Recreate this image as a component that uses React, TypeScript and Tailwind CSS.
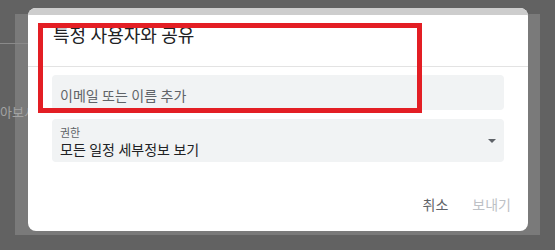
import { useState } from 'react';

const font = { fontFamily: 'Roboto, "Noto Sans CJK KR", sans-serif' };

// Drop-down caret of the permission field
const Caret = () => (
    <svg width="8" height="4" viewBox="0 0 8 4" className="shrink-0">
        <polygon points="0,0 8,0 4,4" fill="#5f6368" />
    </svg>
);

const ShareDialog = () => {
    const [email, setEmail] = useState('');

    return (
        <div className="absolute left-[28px] top-[8px] w-[500px] h-[223px] bg-white rounded-lg overflow-hidden flex flex-col">
            <div className="h-[7px] bg-[#cdcdcd]" />
            <div className="px-[25px] pt-[9px] pb-[18px] border-b border-[#e3e3e3]">
                <h2 className="text-[18px] leading-6 text-[#202124]">특정 사용자와 공유</h2>
            </div>
            <div className="px-6 pt-2 flex flex-col gap-[9px]">
                <input
                    value={email}
                    onChange={(e) => setEmail(e.target.value)}
                    placeholder="이메일 또는 이름 추가"
                    className="h-[35px] w-full rounded bg-[#f1f3f4] pl-2 pt-[7px] text-[14px] text-[#202124] outline-none placeholder:text-[#5f6368]"
                />
                <div className="h-[43px] rounded bg-[#f1f3f4] pl-2 pr-2 flex items-center justify-between">
                    <div className="flex flex-col pt-[5px]">
                        <span className="text-[11px] leading-[14px] text-[#5f6368]">권한</span>
                        <span className="text-[14px] leading-[18px] text-[#202124]">모든 일정 세부정보 보기</span>
                    </div>
                    <Caret />
                </div>
            </div>
            <div className="mt-[25px] pr-[9px] flex justify-end gap-2">
                <button className="h-9 px-2 text-[14px] text-[#5f6368]">취소</button>
                <button disabled className="h-9 px-2 text-[14px] text-[#bdc1c6]">보내기</button>
            </div>
        </div>
    );
};

export default function App() {
    return (
        <div className="relative w-[555px] h-[250px] overflow-hidden bg-[#626262] pt-[14px] pl-[15px]" style={font}>
            {/* dimmed page behind the dialog */}
            <div className="w-[525px] h-[221px] bg-[#7a7a7a]" />
            <div className="absolute left-0 top-[43px] w-[40px] h-px bg-[#8a8a8a]" />
            <span className="absolute left-0 top-[105px] text-[13px] leading-4 text-[#a3a3a3] whitespace-nowrap">
                아보시기
            </span>

            <ShareDialog />

            {/* red annotation box */}
            <div className="absolute left-[38px] top-[23px] w-[384px] h-[90px] border-[5px] border-[#e31e24]" />
        </div>
    );
}
